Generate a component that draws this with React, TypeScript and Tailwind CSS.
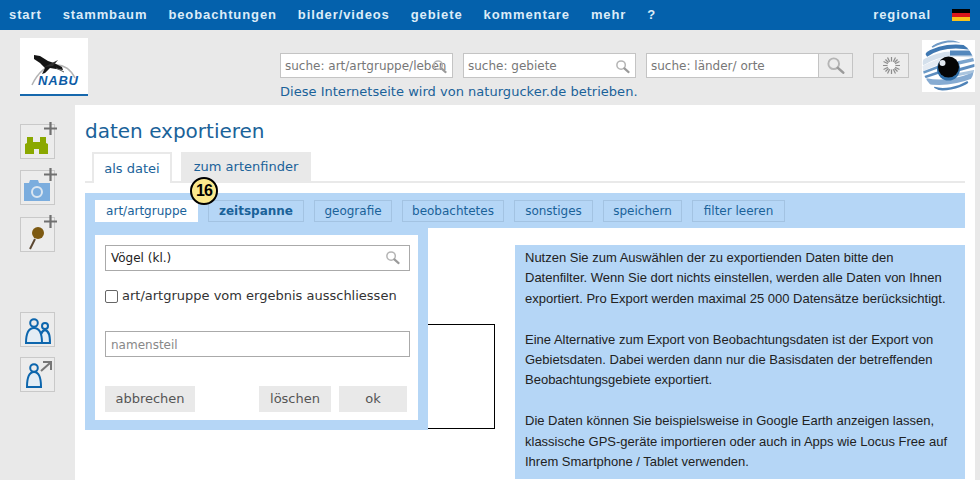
import { ReactNode } from "react";

const navItems = ["start", "stammbaum", "beobachtungen", "bilder/videos", "gebiete", "kommentare", "mehr", "?"];
const filterTabs = [
  { label: "art/artgruppe", cls: "w-[103px] bg-white border-white" },
  { label: "zeitspanne", cls: "w-[96px] font-bold" },
  { label: "geografie", cls: "w-[78px]" },
  { label: "beobachtetes", cls: "w-[102px]" },
  { label: "sonstiges", cls: "w-[79px]" },
  { label: "speichern", cls: "w-[79px]" },
  { label: "filter leeren", cls: "w-[93px]" },
];

function SearchGlyph({ className = "" }: { className?: string }) {
  return (
    <svg viewBox="0 0 16 16" className={className} fill="none">
      <circle cx="6.5" cy="6.5" r="4.5" stroke="#b5b5b5" strokeWidth="1.6" />
      <path d="M10 10l4.5 4" stroke="#9a9a9a" strokeWidth="2.2" strokeLinecap="round" />
    </svg>
  );
}

function SearchBox({ text, width, icon = true }: { text: string; width: string; icon?: boolean }) {
  return (
    <div className={`relative flex h-[25px] items-center overflow-hidden border border-[#c4c4c4] bg-white pl-[4px] pt-[1px] text-[12px] text-[#777] whitespace-nowrap ${width}`}>
      {text}
      {icon && <SearchGlyph className="absolute right-[5px] top-[5px] h-[15px] w-[15px]" />}
    </div>
  );
}

function RailButton({ children, plus = false, className = "" }: { children: ReactNode; plus?: boolean; className?: string }) {
  return (
    <div className={`relative h-[35px] w-[35px] border border-[#c9c9c9] bg-[#ececec] ${className}`}>
      {children}
      {plus && (
        <svg viewBox="0 0 13 13" className="absolute -right-[3px] -top-[3px] h-[13px] w-[13px]">
          <path d="M6.500 0v13M0 6.500h13" stroke="#707070" strokeWidth="2.2" />
        </svg>
      )}
    </div>
  );
}

function EyeLogo() {
  return (
    <svg viewBox="0 0 53 52" className="h-[52px] w-[53px] shrink-0 bg-white">
      <defs>
        <clipPath id="ball">
          <circle cx="26.5" cy="26" r="26" />
        </clipPath>
      </defs>
      <g clipPath="url(#ball)" fill="none">
        <path d="M10 7C18 2 28 0 40 2" stroke="#6f9ac6" strokeWidth="2" />
        <path d="M4 15C14 8 28 4 50 8" stroke="#3f78b2" strokeWidth="4" />
        <path d="M0 23C10 17 20 14 30 14L54 15" stroke="#d4e0ec" strokeWidth="5" />
        <path d="M28 13L54 13" stroke="#5488bd" strokeWidth="5" />
        <path d="M0 29C8 25 14 22 22 20" stroke="#e4ebf3" strokeWidth="5" />
        <path d="M0 33L16 27" stroke="#6b99c6" strokeWidth="2.5" />
        <path d="M0 38L18 32" stroke="#5d8dbf" strokeWidth="2.5" />
        <path d="M36 23L54 19" stroke="#7ba4cd" strokeWidth="3.5" />
        <path d="M36 30L54 25" stroke="#5d8dbf" strokeWidth="3" />
        <path d="M34 35L54 31" stroke="#a9c4de" strokeWidth="3" />
        <path d="M4 41C18 44 34 42 52 35" stroke="#86abd2" strokeWidth="5.500" />
        <path d="M12 48C22 51 36 48 46 42" stroke="#4f83b8" strokeWidth="2.500" />
      </g>
      <circle cx="26.500" cy="29" r="11.500" fill="#2f6ea8" />
      <circle cx="26.500" cy="27" r="10.500" fill="#050505" />
      <circle cx="20.500" cy="23" r="3" fill="#e3e9f0" />
    </svg>
  );
}

function NabuLogo() {
  return (
    <div className="flex h-[58px] w-[68px] shrink-0 flex-col border-b-2 border-[#1668ad] bg-white">
      <svg viewBox="0 0 68 36" className="h-[36px] w-[68px] overflow-visible">
        <path d="M12 47C18 34 27 27 36 27C44 27 51 32 55 40" fill="none" stroke="#b4b4b4" strokeWidth="1.500" />
        <path d="M14 17l6 1 8 5 6 2 8 4 1 3-7-1-6-1-5 5-3 1 3-6-5-5-6-4z" fill="#141414" />
        <path d="M24 29L38 22L33 28z" fill="#2e2e2e" />
        <path d="M36 30l8 4" stroke="#555" strokeWidth="1" />
      </svg>
      <div className="pl-[18px] font-['Liberation_Sans',sans-serif] text-[13px] font-bold italic leading-[14px] tracking-[0.8px] text-[#0d5ca6]">NABU</div>
    </div>
  );
}

function GrayButton({ label, cls }: { label: string; cls: string }) {
  return <div className={`flex h-[26px] items-center justify-center bg-[#e9e9e9] text-[13px] text-[#555] ${cls}`}>{label}</div>;
}

export default function App() {
  return (
    <div className="h-[480px] w-[980px] overflow-hidden bg-[#e9e9e9] font-['DejaVu_Sans',Verdana,sans-serif]">
      {/* top nav */}
      <div className="flex h-[30px] items-center bg-[#0461ac] pl-[9px] pr-[10px] font-['Liberation_Sans',Arial,sans-serif] text-[13px] font-bold tracking-[0.9px] text-[#dcecf8]">
        <div className="flex gap-[21px]">
          {navItems.map((n) => (
            <span key={n}>{n}</span>
          ))}
        </div>
        <span className="ml-auto mr-[21px]">regional</span>
        <div className="flex h-[12px] w-[18px] flex-col">
          <div className="h-1/3 bg-black" />
          <div className="h-1/3 bg-[#d8161b]" />
          <div className="h-1/3 bg-[#f9c21c]" />
        </div>
      </div>

      {/* header */}
      <div className="flex h-[75px] pl-[20px] pr-[5px]">
        <div className="mt-[8px]">
          <NabuLogo />
        </div>
        <div className="ml-[192px] mt-[23px]">
          <div className="flex gap-[10px]">
            <SearchBox text="suche: art/artgruppe/leben" width="w-[173px]" />
            <SearchBox text="suche: gebiete" width="w-[173px]" />
            <div className="flex">
              <SearchBox text="suche: länder/ orte" width="w-[173px]" icon={false} />
              <div className="flex h-[25px] w-[34px] items-center justify-center border border-l-0 border-[#c4c4c4] bg-[#ececec]">
                <SearchGlyph className="h-[19px] w-[19px]" />
              </div>
            </div>
          </div>
          <div className="mt-[5px] text-[13px] leading-[18px] tracking-[0.02px] text-[#1a6299] whitespace-nowrap">Diese Internetseite wird von naturgucker.de betrieben.</div>
        </div>
        <div className="ml-[20px] mt-[23px] flex h-[25px] w-[36px] items-center justify-center border border-[#c4c4c4] bg-[#ececec]">
          <svg viewBox="0 0 18 18" className="h-[17px] w-[17px]">
            <g stroke="#8d8d8d" strokeWidth="1.300">
              <path d="M9 0v18M0 9h18M2.600 2.600l12.800 12.800M15.400 2.600L2.600 15.400M4.800 0.600l8.400 16.800M13.200 0.600L4.800 17.400M0.600 4.800l16.800 8.400M17.400 4.800L0.600 13.200" />
            </g>
            <circle cx="9" cy="9" r="4.200" fill="#f4f4f4" />
          </svg>
        </div>
        <div className="ml-auto mt-[10px]">
          <EyeLogo />
        </div>
      </div>

      <div className="flex pr-[5px]">
        {/* left rail */}
        <div className="w-[75px] shrink-0 pl-[20px] pt-[19px]">
          <RailButton plus>
            <svg viewBox="0 0 33 33" className="h-full w-full">
              <path d="M4 29V19l2-1v-6h6v5h7v-5h6v6l2 1v10h-9v-5h-5v5z" fill="#8aa800" />
            </svg>
          </RailButton>
          <RailButton plus className="mt-[11px]">
            <svg viewBox="0 0 33 33" className="h-full w-full">
              <path d="M3 12h5l1-3h8l1 3h11v18H3z" fill="#7badde" />
              <circle cx="16" cy="21" r="5" fill="#7badde" stroke="#dbe6f1" strokeWidth="2" />
            </svg>
          </RailButton>
          <RailButton plus className="mt-[12px]">
            <svg viewBox="0 0 33 33" className="h-full w-full">
              <path d="M14 21L9 31" stroke="#5a4630" strokeWidth="2" />
              <circle cx="17" cy="15" r="6" fill="#7d5a12" />
            </svg>
          </RailButton>
          <RailButton className="mt-[60px]">
            <svg viewBox="0 0 33 33" className="h-full w-full" fill="none" stroke="#0d66ad" strokeWidth="2">
              <circle cx="13" cy="10" r="3.800" />
              <circle cx="24" cy="13" r="3" />
              <path d="M19 30c0-8 1-12 5-13c4 1 5 5 5 13z" fill="#e3edf5" />
              <path d="M5 30c0-10 3-15 8-15s8 5 8 15z" fill="#e3edf5" />
            </svg>
          </RailButton>
          <RailButton className="mt-[10px]">
            <svg viewBox="0 0 33 33" className="h-full w-full" fill="none" stroke="#0d66ad" strokeWidth="2">
              <circle cx="13" cy="10" r="3.800" />
              <path d="M6 29c0-10 3-15 7-15s7 5 7 15z" fill="#e3edf5" />
              <path d="M20 13l9-8M22 4h8v8" stroke="#777" />
            </svg>
          </RailButton>
        </div>

        {/* main */}
        <div className="relative h-[375px] flex-1 bg-white pl-[10px] pr-[10px]">
          <h1 className="pt-[13px] text-[20px] leading-[26px] text-[#1a6299]">daten exportieren</h1>
          <div className="mt-[7px] flex h-[32px] items-end gap-[9px] border-b-2 border-[#e9e9e9] pl-[7px]">
            <div className="-mb-[2px] flex h-[31px] w-[80px] items-center justify-center border-2 border-b-0 border-[#e9e9e9] bg-white text-[13px] text-[#1a6299]">als datei</div>
            <div className="flex h-[29px] w-[130px] items-center justify-center bg-[#e9e9e9] text-[13px] text-[#1a6299]">zum artenfinder</div>
          </div>

          <div className="mt-[10px] flex h-[35px] items-start gap-[10px] bg-[#b5d6f6] pl-[10px] pt-[7px]">
            {filterTabs.map((t) => (
              <div key={t.label} className={`flex h-[22px] items-center justify-center border border-[#a3c3e2] text-[12px] text-[#1a6299] ${t.cls}`}>
                {t.label}
              </div>
            ))}
          </div>

          <div className="flex items-start">
            <div className="mt-[96px] h-[105px] w-[410px] shrink-0 border border-black" />
            <div className="ml-[20px] mt-[17px] h-[234px] w-[450px] shrink-0 bg-[#b5d6f6] px-[10px] pt-[3px] font-['Liberation_Sans',Arial,sans-serif] text-[13px] leading-[20.4px] text-[#222]">
              <p>Nutzen Sie zum Auswählen der zu exportienden Daten bitte den Datenfilter. Wenn Sie dort nichts einstellen, werden alle Daten von Ihnen exportiert. Pro Export werden maximal 25 000 Datensätze berücksichtigt.</p>
              <p className="mt-[20.4px]">Eine Alternative zum Export von Beobachtungsdaten ist der Export von Gebietsdaten. Dabei werden dann nur die Basisdaten der betreffenden Beobachtungsgebiete exportiert.</p>
              <p className="mt-[20.4px]">Die Daten können Sie beispielsweise in Google Earth anzeigen lassen, klassische GPS-geräte importieren oder auch in Apps wie Locus Free auf Ihrem Smartphone / Tablet verwenden.</p>
            </div>
          </div>

          {/* count badge */}
          <div className="absolute left-[115px] top-[72px] flex h-[28px] w-[28px] items-center justify-center rounded-full border-2 border-black bg-[#fbe88c] font-['Liberation_Sans',Arial,sans-serif] text-[16px] font-bold tracking-[-1px] text-black">16</div>

          {/* open filter popup */}
          <div className="absolute left-[10px] top-[123px] h-[202px] w-[343px] bg-[#b5d6f6] px-[10px] pt-[7px]">
            <div className="h-[185px] bg-white px-[10px] pt-[10px]">
              <div className="relative flex h-[26px] w-[305px] items-center border border-[#aaa] pl-[5px] text-[12px] text-[#222]">
                Vögel (kl.)
                <SearchGlyph className="absolute right-[9px] top-[4px] h-[15px] w-[15px]" />
              </div>
              <label className="mt-[17px] flex h-[16px] items-center text-[13px] text-[#333] whitespace-nowrap">
                <span className="h-[13px] w-[13px] rounded-[2px] border border-[#666] bg-white" />
                <span className="ml-[4px]">art/artgruppe vom ergebnis ausschliessen</span>
              </label>
              <div className="mt-[27px] flex h-[26px] w-[305px] items-center border border-[#aaa] pl-[5px] pt-[1px] text-[12px] text-[#888]">namensteil</div>
              <div className="mt-[29px] flex">
                <GrayButton label="abbrechen" cls="w-[90px]" />
                <GrayButton label="löschen" cls="ml-[64px] w-[72px]" />
                <GrayButton label="ok" cls="ml-[8px] w-[68px]" />
              </div>
            </div>
          </div>
        </div>
      </div>
    </div>
  );
}
